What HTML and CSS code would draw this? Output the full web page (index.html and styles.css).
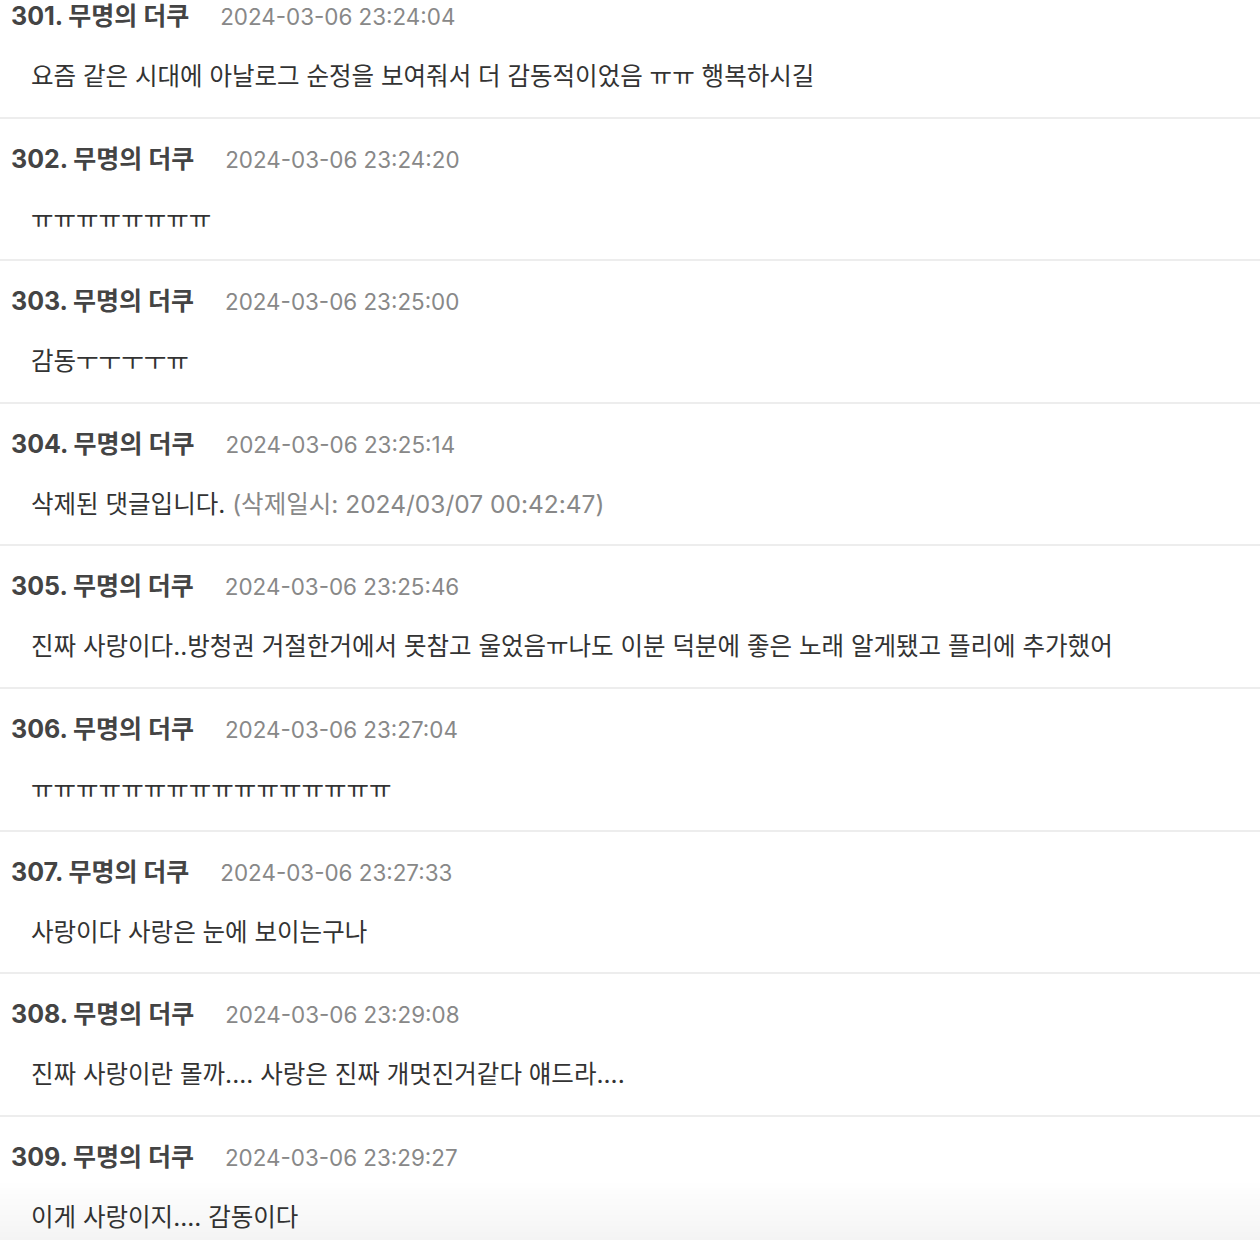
FILE: index.html
```html
<!DOCTYPE html>
<html lang="ko">
<head>
<meta charset="utf-8">
<title>댓글</title>
<link rel="stylesheet" href="styles.css">
</head>
<body>
<ul class="comments">
  <li class="comment">
    <div class="head"><span class="name">301. 무명의 더쿠</span><span class="date">2024-03-06 23:24:04</span></div>
    <div class="body">요즘 같은 시대에 아날로그 순정을 보여줘서 더 감동적이었음 ㅠㅠ 행복하시길</div>
  </li>
  <li class="comment">
    <div class="head"><span class="name">302. 무명의 더쿠</span><span class="date">2024-03-06 23:24:20</span></div>
    <div class="body">ㅠㅠㅠㅠㅠㅠㅠㅠ</div>
  </li>
  <li class="comment">
    <div class="head"><span class="name">303. 무명의 더쿠</span><span class="date">2024-03-06 23:25:00</span></div>
    <div class="body">감동ㅜㅜㅜㅜㅠ</div>
  </li>
  <li class="comment">
    <div class="head"><span class="name">304. 무명의 더쿠</span><span class="date">2024-03-06 23:25:14</span></div>
    <div class="body">삭제된 댓글입니다. <span class="deleted">(삭제일시: 2024/03/07 00:42:47)</span></div>
  </li>
  <li class="comment">
    <div class="head"><span class="name">305. 무명의 더쿠</span><span class="date">2024-03-06 23:25:46</span></div>
    <div class="body">진짜 사랑이다..방청권 거절한거에서 못참고 울었음ㅠ나도 이분 덕분에 좋은 노래 알게됐고 플리에 추가했어</div>
  </li>
  <li class="comment">
    <div class="head"><span class="name">306. 무명의 더쿠</span><span class="date">2024-03-06 23:27:04</span></div>
    <div class="body">ㅠㅠㅠㅠㅠㅠㅠㅠㅠㅠㅠㅠㅠㅠㅠㅠ</div>
  </li>
  <li class="comment">
    <div class="head"><span class="name">307. 무명의 더쿠</span><span class="date">2024-03-06 23:27:33</span></div>
    <div class="body">사랑이다 사랑은 눈에 보이는구나</div>
  </li>
  <li class="comment">
    <div class="head"><span class="name">308. 무명의 더쿠</span><span class="date">2024-03-06 23:29:08</span></div>
    <div class="body">진짜 사랑이란 몰까.... 사랑은 진짜 개멋진거같다 얘드라....</div>
  </li>
  <li class="comment">
    <div class="head"><span class="name">309. 무명의 더쿠</span><span class="date">2024-03-06 23:29:27</span></div>
    <div class="body">이게 사랑이지.... 감동이다</div>
  </li>
</ul>
<div class="fade"></div>
</body>
</html>
```
FILE: styles.css
```css
html, body {
  margin: 0;
  padding: 0;
  background: #ffffff;
  overflow: hidden;
}
body {
  font-family: Inter, "Noto Sans CJK KR", "Noto Sans", sans-serif;
  color: #333333;
}
.comments {
  list-style: none;
  margin: -24px 0 0 0;
  padding: 0;
}
.comment {
  padding: 25px 0 23.6px 11px;
  border-bottom: 2px solid #ededed;
}
.head {
  display: flex;
  align-items: baseline;
  height: 30px;
  line-height: 30px;
}
.name {
  font-size: 25px;
  font-weight: 700;
  color: #444444;
}
.date {
  margin-left: 31px;
  font-size: 22.4px;
  color: #888888;
}
.body {
  margin-top: 28px;
  padding-left: 20px;
  height: 34px;
  line-height: 34px;
  font-size: 24.5px;
  color: #333333;
  white-space: nowrap;
}
.deleted {
  color: #888888;
}
.fade {
  position: fixed;
  left: 0;
  right: 0;
  bottom: 0;
  height: 60px;
  background: linear-gradient(to bottom, rgba(0,0,0,0), rgba(0,0,0,0.045));
  pointer-events: none;
}
```
